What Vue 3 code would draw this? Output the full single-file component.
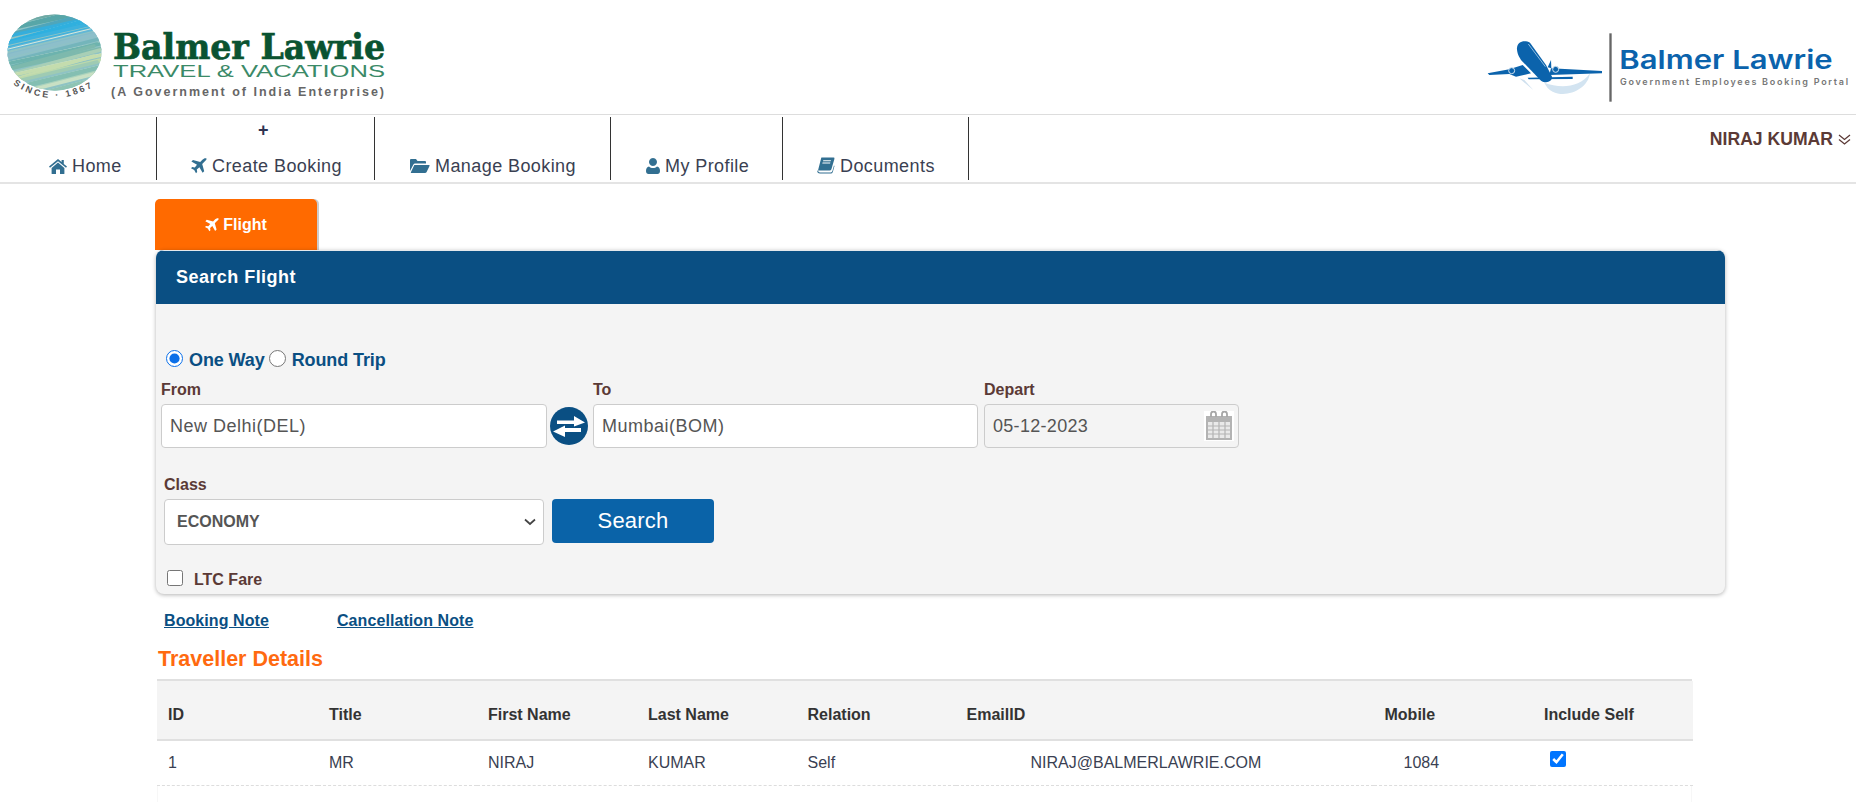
<script setup>
const navItems = [
  { label: 'Home', icon: 'home', w: 157, pl: 49, iw: 18, ih: 15, vb: '0 0 18 15' },
  { label: 'Create Booking', icon: 'plane', w: 218, pl: 34, iw: 16, ih: 16, vb: '0 0 16 16', plus: true },
  { label: 'Manage Booking', icon: 'folder', w: 236, pl: 35, iw: 20, ih: 16, vb: '0 0 20 16' },
  { label: 'My Profile', icon: 'user', w: 172, pl: 35, iw: 14, ih: 16, vb: '0 0 14 16' },
  { label: 'Documents', icon: 'book', w: 186, pl: 34, iw: 18, ih: 17, vb: '0 0 18 17' }
]
const iconPaths = {
  home: 'M9 0 L0 7.6 L1 8.8 L9 2.2 L17 8.8 L18 7.6 L14.8 4.9 V1 H12.6 V3 Z M9 3.6 L2.6 9 V14.4 Q2.6 15 3.2 15 H7 V10.6 H11 V15 H14.8 Q15.4 15 15.4 14.4 V9 Z',
  plane: 'M15.4 0.6 C14.4 -0.2 12.6 0.6 11.4 1.8 L9.2 4 L2 2 L0.4 3.6 L6 6.8 L3.8 9.4 L1.2 9 L0 10.2 L3.2 12 L5 15.2 L6.2 14 L5.8 11.4 L8.4 9.2 L11.6 14.8 L13.2 13.2 L11.2 6 L13.4 3.8 C14.6 2.6 16.2 1.4 15.4 0.6 Z',
  folder: 'M0 13 V2 Q0 1 1 1 H6 L7.5 3 H15 Q16 3 16 4 V5.5 H5 Q4 5.5 3.4 6.5 Z M4.3 7 H19 Q20 7 19.5 8 L16.5 14.2 Q16 15 15 15 H1 Q0.5 15 1 14 Z',
  user: 'M7 0 A4 4 0 1 1 6.99 0 Z M3 8.4 C4.2 9.6 5.5 10 7 10 C8.5 10 9.8 9.6 11 8.4 C13 8.6 14 10.4 14 13 C14 14.8 13 16 11.5 16 H2.5 C1 16 0 14.8 0 13 C0 10.4 1 8.6 3 8.4 Z',
  book: 'M4.4 0.6 H16.6 Q17.8 0.6 17.4 2 L14.4 12.2 Q14 13.4 12.6 13.4 H1 L4.2 1 Z M6.3 3.2 H14 L13.7 4.2 H6 Z M5.6 5.6 H13.4 L13.1 6.6 H5.3 Z M1 13.8 Q1.4 15.4 3 15.4 H13.8 Q15 15.4 15.4 14 L17 8.5 L17.5 9 L15.8 15 Q15.3 16.6 13.8 16.6 H3 Q0 16.6 0.3 13.6 Z'
}
const columns = [
  { label: 'ID', w: 161 },
  { label: 'Title', w: 159 },
  { label: 'First Name', w: 160 },
  { label: 'Last Name', w: 159.5 },
  { label: 'Relation', w: 159 },
  { label: 'EmailID', w: 418 },
  { label: 'Mobile', w: 159.5 },
  { label: 'Include Self', w: 159.5 }
]

const palette = [
  '#6fa9a4', '#58a6a8', '#4fa6bb', '#35aedb', '#2fb0df', '#3db2de', '#62b7d6', '#86bccb',
  '#8dbfca', '#74b5bb', '#6db3ae', '#7db9ad', '#a8cfb6', '#c4dcae', '#bcd9ac', '#9fcbb3',
  '#84bfb2', '#a9d2bc', '#c8e0c4', '#8fc4b4'
]
const strokes = []
palette.forEach((color, i) => {
  for (let k = 0; k < 2; k++) {
    const y = 14 + i * 4 + k * 2
    const j1 = ((i * 7 + k * 3) % 5) * 4
    const j2 = ((i * 5 + k * 11) % 7) * 3
    strokes.push({
      key: i + '-' + k,
      color: k === 1 && i % 3 === 0 ? '#d7e8dc' : color,
      width: k === 1 && i % 3 === 0 ? 1 : 3.4,
      d: `M${j1 - 4} ${y + 12} L${112 - j2} ${y - 12}`
    })
  }
})
</script>

<template>
  <div class="page">
    <header class="brand">
      <svg width="392" height="114" viewBox="0 0 392 114">
        <defs>
          <clipPath id="globe-clip"><ellipse cx="54.5" cy="52.5" rx="47" ry="38" /></clipPath>
        </defs>
        <g clip-path="url(#globe-clip)">
          <rect x="0" y="10" width="110" height="90" fill="#8fc3c4" />
          <g fill="none" stroke-linecap="round">
            <path v-for="s in strokes" :key="s.key" :d="s.d" :stroke="s.color" :stroke-width="s.width" />
          </g>
        </g>
        <path id="since" d="M13 84 Q52 112 98 84" fill="none" />
        <text font-family="Liberation Sans, sans-serif" font-size="9" font-weight="700" fill="#555" letter-spacing="2.6"><textPath href="#since">SINCE · 1867</textPath></text>
        <text x="113" y="59" font-family="DejaVu Serif, serif" font-size="36" font-weight="700" fill="#0a5331" stroke="#0a5331" stroke-width=".7" textLength="272" lengthAdjust="spacingAndGlyphs">Balmer Lawrie</text>
        <text x="113" y="77" font-family="Liberation Sans, sans-serif" font-size="16" fill="#3b8a68" textLength="272" lengthAdjust="spacingAndGlyphs">TRAVEL &amp; VACATIONS</text>
        <text x="111" y="96" font-family="Liberation Sans, sans-serif" font-size="12.5" font-weight="700" fill="#666" textLength="273" lengthAdjust="spacing">(A Government of India Enterprise)</text>
      </svg>
      <svg class="logo-right" width="400" height="100" viewBox="0 0 1200 300">
        <path d="M265 218 C310 235 370 235 402 190 C395 240 330 265 290 245 C280 240 270 230 265 218 Z" fill="#d3e4f1" />
        <path d="M190 205 L232 240 L205 210 Z" fill="#cfe0ee" />
        <path d="M95 190 L160 178 L200 165 L225 190 L180 200 L160 192 L100 195 Z" fill="#0b63ac" />
        <path d="M285 175 L438 183 L438 190 L280 195 Z" fill="#0b63ac" />
        <path d="M215 203 L350 200 L350 207 L218 208 Z" fill="#0b63ac" />
        <path d="M275 172 L285 150 L286 175 Z" fill="#0b63ac" />
        <path d="M183 115 C183 95 205 88 222 98 L270 165 L288 200 C290 215 270 222 255 212 L195 150 C185 135 183 125 183 115 Z" fill="#0b63ac" />
        <path d="M217 102 L268 170" stroke="#8fbde0" stroke-width="3" fill="none" />
        <circle cx="167" cy="182" r="9" fill="#0b63ac" stroke="#cfe0ee" stroke-width="3" />
        <circle cx="299" cy="178" r="9" fill="#0b63ac" stroke="#cfe0ee" stroke-width="3" />
        <rect x="460" y="70" width="7" height="205" fill="#666" />
        <text x="490" y="178" font-family="Inter, Liberation Sans, sans-serif" font-size="78" font-weight="600" fill="#0b63ac" textLength="640" lengthAdjust="spacingAndGlyphs">Balmer Lawrie</text>
        <text x="492" y="224" font-family="Inter, Liberation Sans, sans-serif" font-size="27" font-weight="600" fill="#777" textLength="684" lengthAdjust="spacing">Government Employees Booking Portal</text>
      </svg>
    </header>

    <nav class="nav">
      <ul class="nav-list">
        <li v-for="item in navItems" :key="item.label" class="nav-item" :style="{ width: item.w + 'px', paddingLeft: item.pl + 'px' }">
          <span v-if="item.plus" class="plus">+</span>
          <svg class="nav-icon" :width="item.iw" :height="item.ih" :viewBox="item.vb"><path :d="iconPaths[item.icon]" fill="#326f91" fill-rule="evenodd" /></svg>
          <span class="nav-label">{{ item.label }}</span>
        </li>
      </ul>
      <div class="user">
        NIRAJ KUMAR
        <svg width="13" height="12" viewBox="0 0 13 12" fill="none" stroke="#5b3a36" stroke-width="1.3"><path d="M1 2 L6.5 6.5 L12 2 M1 6.5 L6.5 11 L12 6.5" /></svg>
      </div>
    </nav>

    <main class="content">
      <div class="tab">
        <svg width="14" height="14" viewBox="0 0 16 16"><path :d="iconPaths.plane" fill="#fff" /></svg>
        Flight
      </div>

      <section class="panel">
        <h2 class="panel-title">Search Flight</h2>
        <div class="panel-body">
          <div class="trip">
            <label class="radio"><input type="radio" name="trip" checked /><span>One Way</span></label>
            <label class="radio"><input type="radio" name="trip" /><span>Round Trip</span></label>
          </div>
          <div class="route">
            <div class="field from">
              <label>From</label>
              <input type="text" value="New Delhi(DEL)" />
            </div>
            <button class="swap" type="button" aria-label="Swap">
              <svg width="38" height="38" viewBox="0 0 38 38">
                <circle cx="19" cy="19" r="19" fill="#0a4f83" />
                <path d="M7 13.5 H24 V9 L35 15.5 L24 19.5 V17 H7 Z M31 21 H15 V18.5 L3 24.5 L15 30 V25 H31 Z" fill="#fff" />
              </svg>
            </button>
            <div class="field to">
              <label>To</label>
              <input type="text" value="Mumbai(BOM)" />
            </div>
            <div class="field depart">
              <label>Depart</label>
              <div class="date">
                <input type="text" value="05-12-2023" readonly />
                <svg class="cal" width="30" height="30" viewBox="0 0 30 30">
                  <rect width="30" height="30" fill="#fff" />
                  <path d="M2 5 H28 V29 H2 Z" fill="#b3b3b3" />
                  <path d="M7 6 V3 A2.5 2.5 0 0 1 12 3 V6 M18 6 V3 A2.5 2.5 0 0 1 23 3 V6" fill="none" stroke="#a6a6a6" stroke-width="1.8" />
                  <path d="M4 11 H26 V27 H4 Z" fill="#e9e9e9" />
                  <path d="M4 15 H26 M4 19 H26 M4 23 H26 M9 11 V27 M15 11 V27 M21 11 V27" stroke="#b3b3b3" stroke-width="1.2" />
                </svg>
              </div>
            </div>
          </div>
          <div class="class-row">
            <div class="field class-field">
              <label>Class</label>
              <div class="select">
                <span>ECONOMY</span>
                <svg width="12" height="8" viewBox="0 0 12 8" fill="none" stroke="#444" stroke-width="1.7"><path d="M1 1.5 L6 6 L11 1.5" /></svg>
              </div>
            </div>
            <button class="search" type="button">Search</button>
          </div>
          <label class="ltc"><input type="checkbox" /><span>LTC Fare</span></label>
        </div>
      </section>

      <div class="notes">
        <a href="#">Booking Note</a>
        <a href="#">Cancellation Note</a>
      </div>

      <section class="traveller">
        <h3>Traveller Details</h3>
        <table>
          <thead>
            <tr>
              <th v-for="c in columns" :key="c.label" :style="{ width: c.w + 'px' }">{{ c.label }}</th>
            </tr>
          </thead>
          <tbody>
            <tr>
              <td>1</td>
              <td>MR</td>
              <td>NIRAJ</td>
              <td>KUMAR</td>
              <td>Self</td>
              <td class="email">NIRAJ@BALMERLAWRIE.COM</td>
              <td class="mobile">1084</td>
              <td class="inc"><input type="checkbox" checked /></td>
            </tr>
          </tbody>
        </table>
        <div class="row-gap"></div>
      </section>
    </main>
  </div>
</template>

<style>
html, body { margin: 0; background: #fff; overflow: hidden; }
</style>

<style scoped>
.page { width: 1856px; height: 802px; overflow: hidden; font-family: "Liberation Sans", Arial, sans-serif; color: #333; }
.brand { height: 115px; box-sizing: border-box; border-bottom: 1px solid #ddd; display: flex; justify-content: space-between; align-items: flex-start; }
.logo-right { margin-top: 10px; }
.nav { height: 69px; box-sizing: border-box; border-bottom: 2px solid #e4e4e4; display: flex; justify-content: space-between; padding-top: 2px; }
.nav-list { list-style: none; margin: 0; padding: 0; display: flex; height: 63px; }
.nav-item { position: relative; box-sizing: border-box; border-right: 1px solid #333; display: flex; align-items: flex-end; gap: 5px; font-size: 18px; color: #3a3f52; padding-bottom: 2px; line-height: 24px; }
.nav-label { letter-spacing: .42px; white-space: nowrap; }
.nav-icon { margin-bottom: 4px; flex: none; }
.plus { position: absolute; left: 101px; top: 2px; font-weight: 700; font-size: 18px; line-height: 22px; color: #2f3350; }
.user { font-size: 17.6px; font-weight: 700; color: #5b3a36; margin: 12px 5px 0 0; display: flex; align-items: center; gap: 5px; height: 20px; }
.content { padding: 15px 0 0 155px; }
.tab { width: 162px; height: 51px; box-sizing: border-box; background: #ff6a00; border-radius: 5px 5px 0 0; color: #fff; font-size: 16px; font-weight: 700; display: flex; align-items: center; justify-content: center; gap: 4px; box-shadow: 2px 0 0 #ccc; }
.panel { width: 1569px; margin-left: 1px; border-radius: 8px; overflow: hidden; box-shadow: 0 1px 4px rgba(0,0,0,.3); background: #f4f4f4; }
.panel-title { margin: 0; height: 54px; box-sizing: border-box; border-top: 1px solid #e4e8ec; background: #0a4f83; color: #fff; font-size: 18px; font-weight: 700; line-height: 53px; padding-left: 20px; letter-spacing: .45px; }
.panel-body { height: 290px; box-sizing: border-box; padding: 44px 0 0 5px; }
.trip { display: flex; gap: 4px; height: 24px; margin-left: 5px; align-items: center; }
.radio { display: flex; align-items: center; gap: 6px; font-size: 18px; font-weight: 700; color: #0a4f83; letter-spacing: -.1px; }
.radio input { width: 17px; height: 17px; margin: 0 0 3px; accent-color: #0b6fe8; }
.route { display: flex; margin-top: 8px; align-items: flex-end; }
.field label { display: block; font-size: 16px; font-weight: 700; color: #5b3a36; line-height: 20px; height: 24px; }
.field input { box-sizing: border-box; height: 44px; border: 1px solid #ccc; border-radius: 4px; background: #fff; font: 18px "Liberation Sans", Arial, sans-serif; letter-spacing: .5px; color: #555; padding: 0 8px; width: 100%; outline: none; display: block; }
.from { width: 386px; }
.swap { width: 46px; height: 44px; border: 0; background: none; padding: 0 2px 0 0; display: flex; align-items: center; justify-content: center; }
.to { width: 385px; }
.depart { width: 255px; margin-left: 6px; }
.date { position: relative; }
.date input { background: #f4f4f4; letter-spacing: .3px; }
.cal { position: absolute; right: 5px; top: 7px; }
.class-row { display: flex; margin: 27px 0 0 3px; align-items: flex-end; gap: 8px; }
.class-field { width: 380px; }
.select { box-sizing: border-box; height: 46px; background: #fff; border: 1px solid #ccc; border-radius: 4px; display: flex; align-items: center; justify-content: space-between; padding: 0 7px 0 12px; font-size: 16px; font-weight: 700; color: #555; }
.search { width: 162px; height: 44px; background: #0a63a8; border: 0; border-radius: 4px; color: #fff; font: 22px "Liberation Sans", Arial, sans-serif; letter-spacing: .2px; margin-bottom: 2px; }
.ltc { display: flex; align-items: center; gap: 11px; margin: 25px 0 0 6px; font-size: 16px; font-weight: 700; color: #5b3a36; }
.ltc input { width: 16px; height: 16px; margin: 0 0 3px; }
.notes { display: flex; gap: 68px; padding: 17px 0 0 9px; font-size: 16px; font-weight: 700; line-height: 20px; letter-spacing: .08px; }
.notes a { color: #0a4f83; text-decoration: underline; }
.traveller { width: 1535px; margin-top: 13px; margin-left: 2px; box-sizing: border-box; }
.traveller h3 { margin: 0; height: 35px; font-size: 21.5px; font-weight: 700; color: #ff6a10; line-height: 30px; padding-left: 1px; border-bottom: 2px solid #e0e0e0; box-sizing: content-box; }
table { width: 100%; border-collapse: collapse; table-layout: fixed; font-size: 16px; }
th { background: #f4f4f4; height: 59px; text-align: left; font-weight: 700; padding: 9px 0 0 11px; color: #333; border-bottom: 2px solid #e0e0e0; box-sizing: border-box; }
td { height: 45px; padding: 0 0 0 11px; color: #3a3f52; border-bottom: 1px dashed #ddd; box-sizing: border-box; }
.email { padding-left: 75px; }
.mobile { padding-left: 30px; }
.inc input { width: 16px; height: 16px; margin: 0 0 7px 6px; display: block; }
.row-gap { height: 20px; border-left: 1px solid #f7f7f7; border-right: 1px solid #f7f7f7; }
</style>
